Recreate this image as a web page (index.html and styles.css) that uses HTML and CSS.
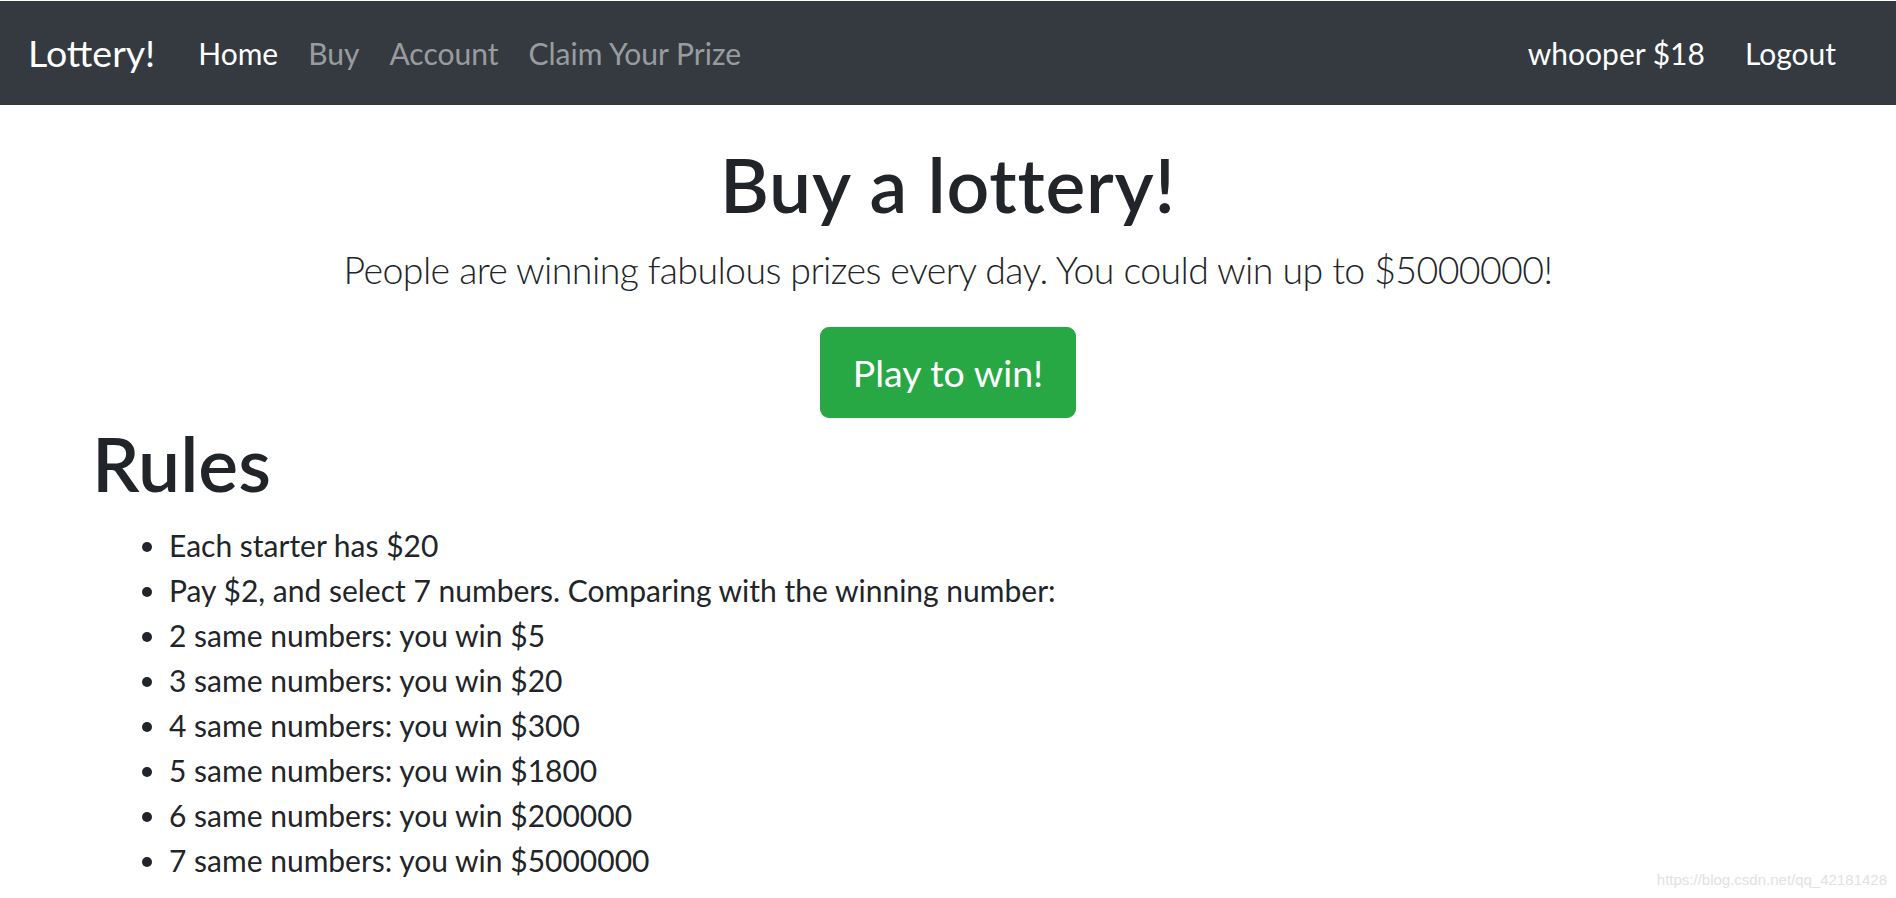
FILE: index.html
```html
<!DOCTYPE html>
<html lang="en">
<head>
<meta charset="utf-8">
<title>Lottery!</title>
<link rel="stylesheet" href="styles.css">
</head>
<body>
<nav class="navbar">
  <a class="brand" href="#">Lottery!</a>
  <ul class="nav">
    <li><a class="nav-link active" href="#">Home</a></li>
    <li><a class="nav-link" href="#">Buy</a></li>
    <li><a class="nav-link" href="#">Account</a></li>
    <li><a class="nav-link" href="#">Claim Your Prize</a></li>
  </ul>
  <ul class="nav nav-right">
    <li><span class="nav-link active">whooper $18</span></li>
    <li><a class="nav-link active" href="#">Logout</a></li>
  </ul>
</nav>
<main class="container">
  <section class="hero">
    <h1 class="title">Buy a lottery!</h1>
    <p class="lead">People are winning fabulous prizes every day. You could win up to $5000000!</p>
    <div class="cta"><a class="btn" href="#">Play to win!</a></div>
  </section>
  <h1 class="rules-title">Rules</h1>
  <ul class="rules">
    <li>Each starter has $20</li>
    <li>Pay $2, and select 7 numbers. Comparing with the winning number:</li>
    <li>2 same numbers: you win $5</li>
    <li>3 same numbers: you win $20</li>
    <li>4 same numbers: you win $300</li>
    <li>5 same numbers: you win $1800</li>
    <li>6 same numbers: you win $200000</li>
    <li>7 same numbers: you win $5000000</li>
  </ul>
</main>
<div class="watermark">https://blog.csdn.net/qq_42181428</div>
</body>
</html>
```

FILE: styles.css
```css
html, body {
  margin: 0;
  padding: 0;
}
body {
  padding-top: 1px;
  font-family: Lato, "Noto Sans", sans-serif;
  color: #212529;
  background: #fff;
  font-size: 30px;
  line-height: 1.5;
}
a { text-decoration: none; }

.navbar {
  display: flex;
  align-items: center;
  height: 104px;
  background: #343a40;
  padding: 0 45px 0 28px;
}
.brand {
  font-size: 37.5px;
  line-height: 56px;
  color: #fff;
  margin-right: 28px;
}
.nav {
  display: flex;
  list-style: none;
  margin: 0;
  padding: 0;
}
.nav-right {
  margin-left: auto;
  gap: 10px;
}
.nav-link {
  display: block;
  padding: 0 15px;
  font-size: 30px;
  line-height: 45px;
  color: rgba(255, 255, 255, 0.5);
}
.nav-link.active {
  color: #fff;
}

.container {
  padding: 34px 92px 0;
}
.hero {
  text-align: center;
}
.title {
  font-size: 75px;
  font-weight: 600;
  line-height: 90px;
  letter-spacing: 0.8px;
  margin: 0 0 13px;
}
.lead {
  font-size: 37.5px;
  font-weight: 300;
  line-height: 56px;
  letter-spacing: -0.6px;
  margin: 0 0 29px;
}
.cta {
  display: flex;
  justify-content: center;
}
.btn {
  display: block;
  background: #28a745;
  border: 1px solid #28a745;
  border-radius: 9px;
  color: #fff;
  font-size: 37.5px;
  line-height: 59px;
  padding: 15px 32px;
}
.rules-title {
  font-size: 75px;
  font-weight: 600;
  line-height: 90px;
  margin: 0 0 15px;
}
.rules {
  margin: 0;
  padding-left: 77px;
}
.rules li {
  font-size: 30px;
  line-height: 45px;
}
.watermark {
  position: absolute;
  right: 9px;
  top: 869px;
  font-family: "Liberation Sans", Arial, sans-serif;
  font-size: 15px;
  color: #e2e2e2;
}
```
